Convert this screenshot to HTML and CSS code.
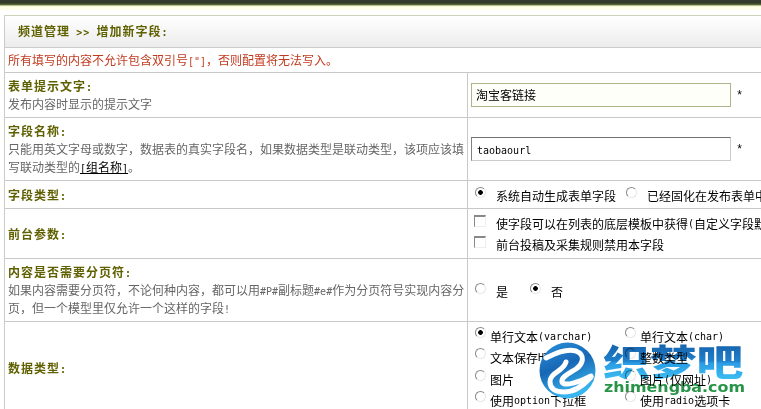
FILE: index.html
```
<!DOCTYPE html>
<html lang="zh-CN">
<head>
    <meta charset="utf-8">
    <title>增加新字段</title>
    <link rel="stylesheet" href="styles.css">
</head>
<body>
    <div class="topbar"></div>
    <div class="panel">
        <div class="title">频道管理 <span class="en">&gt;&gt;</span> 增加新字段<span class="en">:</span></div>
        <div class="notice">所有填写的内容不允许包含双引号<span class="en">["]</span>，否则配置将无法写入。</div>

        <div class="row row-prompt">
            <div class="name"><b>表单提示文字<span class="en">:</span></b><p>发布内容时显示的提示文字</p></div>
            <div class="value"><div class="field"><div class="input focus">淘宝客链接</div><span class="star">*</span></div></div>
        </div>
        <div class="row row-tall">
            <div class="name"><b>字段名称<span class="en">:</span></b><p>只能用英文字母或数字，数据表的真实字段名，如果数据类型是联动类型，该项应该填<br>写联动类型的<a class="link"><span class="en">[</span>组名称<span class="en">]</span></a>。</p></div>
            <div class="value"><div class="field"><div class="input"><span class="en">taobaourl</span></div><span class="star">*</span></div></div>
        </div>
        <div class="row row-type">
            <div class="name"><b>字段类型<span class="en">:</span></b></div>
            <div class="value">
                <div class="line wide">
                    <label class="first"><i class="radio on"></i>系统自动生成表单字段</label>
                    <label><i class="radio"></i>已经固化在发布表单中</label>
                </div>
            </div>
        </div>
        <div class="row row-front">
            <div class="name"><b>前台参数<span class="en">:</span></b></div>
            <div class="value">
                <div class="line wide"><label><i class="check"></i>使字段可以在列表的底层模板中获得<span class="en">(</span>自定义字段默</label></div>
                <div class="line wide"><label><i class="check"></i>前台投稿及采集规则禁用本字段</label></div>
            </div>
        </div>
        <div class="row row-tall">
            <div class="name"><b>内容是否需要分页符<span class="en">:</span></b><p>如果内容需要分页符，不论何种内容，都可以用<span class="en">#P#</span>副标题<span class="en">#e#</span>作为分页符号实现内容分<br>页，但一个模型里仅允许一个这样的字段<span class="en">!</span></p></div>
            <div class="value page-value">
                <div class="line wide">
                    <label class="yes"><i class="radio"></i>是</label>
                    <label><i class="radio on"></i>否</label>
                </div>
            </div>
        </div>
        <div class="row row-data">
            <div class="name"><b>数据类型<span class="en">:</span></b></div>
            <div class="value">
                <div class="types">
                    <label><i class="radio on"></i>单行文本<span class="en">(varchar)</span></label>
                    <label><i class="radio"></i>单行文本<span class="en">(char)</span></label>
                    <label><i class="radio"></i>文本保存<span class="en">HTML</span></label>
                    <label><i class="radio"></i>整数类型</label>
                    <label><i class="radio"></i>图片</label>
                    <label><i class="radio"></i>图片<span class="en">(</span>仅网址<span class="en">)</span></label>
                    <label><i class="radio"></i>使用<span class="en">option</span>下拉框</label>
                    <label><i class="radio"></i>使用<span class="en">radio</span>选项卡</label>
                </div>
            </div>
        </div>
    </div>

    <svg class="logo logo-text" viewBox="0 0 212 60">
        <defs>
            <linearGradient id="word" x1="0" y1="0" x2="0" y2="1">
                <stop offset="0.2" stop-color="#1763ac"/>
                <stop offset="0.52" stop-color="#1f80cc"/>
                <stop offset="0.56" stop-color="#2a9ce4"/>
                <stop offset="0.9" stop-color="#3cc0f4"/>
            </linearGradient>
        </defs>
        <text class="brand" transform="translate(65 34.5) scale(1.3 1)" x="0" y="0">织梦吧</text>
        <text class="domain" x="66" y="51" textLength="141" lengthAdjust="spacingAndGlyphs">zhimengba.com</text>
    </svg>
    <svg class="logo" viewBox="0 0 212 60">
        <defs>
            <linearGradient id="ball" x1="0" y1="0" x2="0.4" y2="1">
                <stop offset="0" stop-color="#2a93dc"/>
                <stop offset="0.5" stop-color="#1767b4"/>
                <stop offset="1" stop-color="#39b5ef"/>
            </linearGradient>
        </defs>
        <circle cx="29.5" cy="29.5" r="28" fill="url(#ball)"/>
        <!-- two interlocking ribbons -->
        <path d="M8 17C16 13 28 7 38 10C48 14 45 23 38 28C30 33 23 36 24 41C26 46 42 41 53 35" fill="none" stroke="#fff" stroke-width="5" stroke-linecap="round" stroke-linejoin="round"/>
        <path d="M28 21C25 31 12 31 12 41C12 48 18 51 26 51C36 51 46 44 53 36" fill="none" stroke="#fff" stroke-width="5" stroke-linecap="round" stroke-linejoin="round"/>
    </svg>
</body>
</html>
```
FILE: styles.css
```
* {
    box-sizing: border-box;
}

body {
    margin: 0;
    height: 409px;
    overflow: hidden;
    position: relative;
    background: #fff;
    color: #000;
    font: 12px/18px "Noto Sans CJK SC", sans-serif;
}

p {
    margin: 0;
}

.topbar {
    height: 15px;
    background: linear-gradient(#333a2b 0 3px, #3f4a26 3px 4px, #54623a 4px 5px, #b9c38f 5px 6px, #f4f8d4 6px 7px, #ffffea 7px 10px, #fff 10px);
}

.en {
    font-family: "DejaVu Sans Mono", monospace;
    font-size: 10px;
    line-height: 1;
}

.panel {
    margin-left: 4px;
    overflow: hidden;
    border-top: 1px solid #cbd3b8;
    border-left: 1px solid #c8cec4;
}

.title {
    height: 32px;
    padding-left: 13px;
    border-bottom: 1px solid #ccc;
    background: linear-gradient(#fff, #ececec);
    color: #5f6000;
    font-weight: bold;
    line-height: 30px;
    letter-spacing: 1px;
    word-spacing: 2.5px;
}

.notice {
    height: 25px;
    padding-left: 3px;
    border-bottom: 1px solid #c8c8c8;
    color: #c23a1e;
    line-height: 24px;
}

.row {
    display: flex;
    border-bottom: 1px solid #c8c8c8;
}

.row-prompt {
    height: 45px;
}

.row-tall {
    height: 63px;
}

.row-type {
    height: 28px;
}

.row-front {
    height: 50px;
}

.row-data {
    height: 92px;
}

.name {
    flex: none;
    width: 463px;
    padding-left: 3px;
    border-right: 1px solid #c8c8c8;
    display: flex;
    flex-direction: column;
    justify-content: center;
    white-space: nowrap;
    color: #666;
}

.name b {
    color: #5f6000;
    letter-spacing: 1px;
}

.link {
    color: #000;
    text-decoration: underline;
}

.value {
    flex: 1;
    min-width: 0;
    display: flex;
    flex-direction: column;
    justify-content: center;
    padding-left: 3px;
}

.field {
    display: flex;
    align-items: center;
}

.input {
    width: 260px;
    height: 24px;
    padding-left: 5px;
    border: 1px solid #ccc;
    border-top-color: #707070;
    border-left-color: #808080;
    line-height: 22px;
}

.input.focus {
    padding-left: 4px;
    border-color: #aeb58c;
    background: #fffffa;
}

.star {
    padding-top: 2px;
    margin-left: 5px;
    font-family: "Liberation Mono", monospace;
}

.line,
.types label {
    display: flex;
    height: 21px;
    line-height: 21px;
}

.line .en,
.types .en {
    line-height: 21px;
}

.line label {
    display: flex;
    flex: none;
    white-space: nowrap;
}

.first {
    width: 151px;
}

.yes {
    width: 55px;
}

.row-type .line,
.page-value .line {
    padding-top: 1px;
}

.radio,
.check {
    flex: none;
    width: 11px;
    height: 11px;
    margin: 1px 4px 0 4px;
    border: 1px solid #ddd;
    border-top-color: #888;
    border-left-color: #888;
}

.wide .radio,
.wide .check {
    margin-right: 10px;
}

.wide .radio {
    margin-top: 2px;
}

.radio {
    border-radius: 50%;
    border-right-color: #e8e8e8;
    border-bottom-color: #e8e8e8;
}

.radio.on {
    background: radial-gradient(circle, #000 2px, transparent 2.7px);
}

.check {
    width: 12px;
    height: 12px;
    margin: 2px 0 0 3px;
    border-right-color: #eee;
    border-bottom-color: #eee;
    border-top-width: 2px;
}

.types {
    display: grid;
    grid-template-columns: 150px 130px;
    grid-auto-rows: 21.3px;
    padding-top: 2px;
}

/* watermark lies over the table */
.logo {
    position: absolute;
    left: 538px;
    top: 341px;
    width: 212px;
    height: 60px;
}

.logo-text {
    mix-blend-mode: multiply;
}

.brand {
    fill: url(#word);
    font: 900 36px "Noto Sans CJK SC", sans-serif;
}

.domain {
    fill: #279447;
    font: bold 14px "DejaVu Sans", sans-serif;
}
```
